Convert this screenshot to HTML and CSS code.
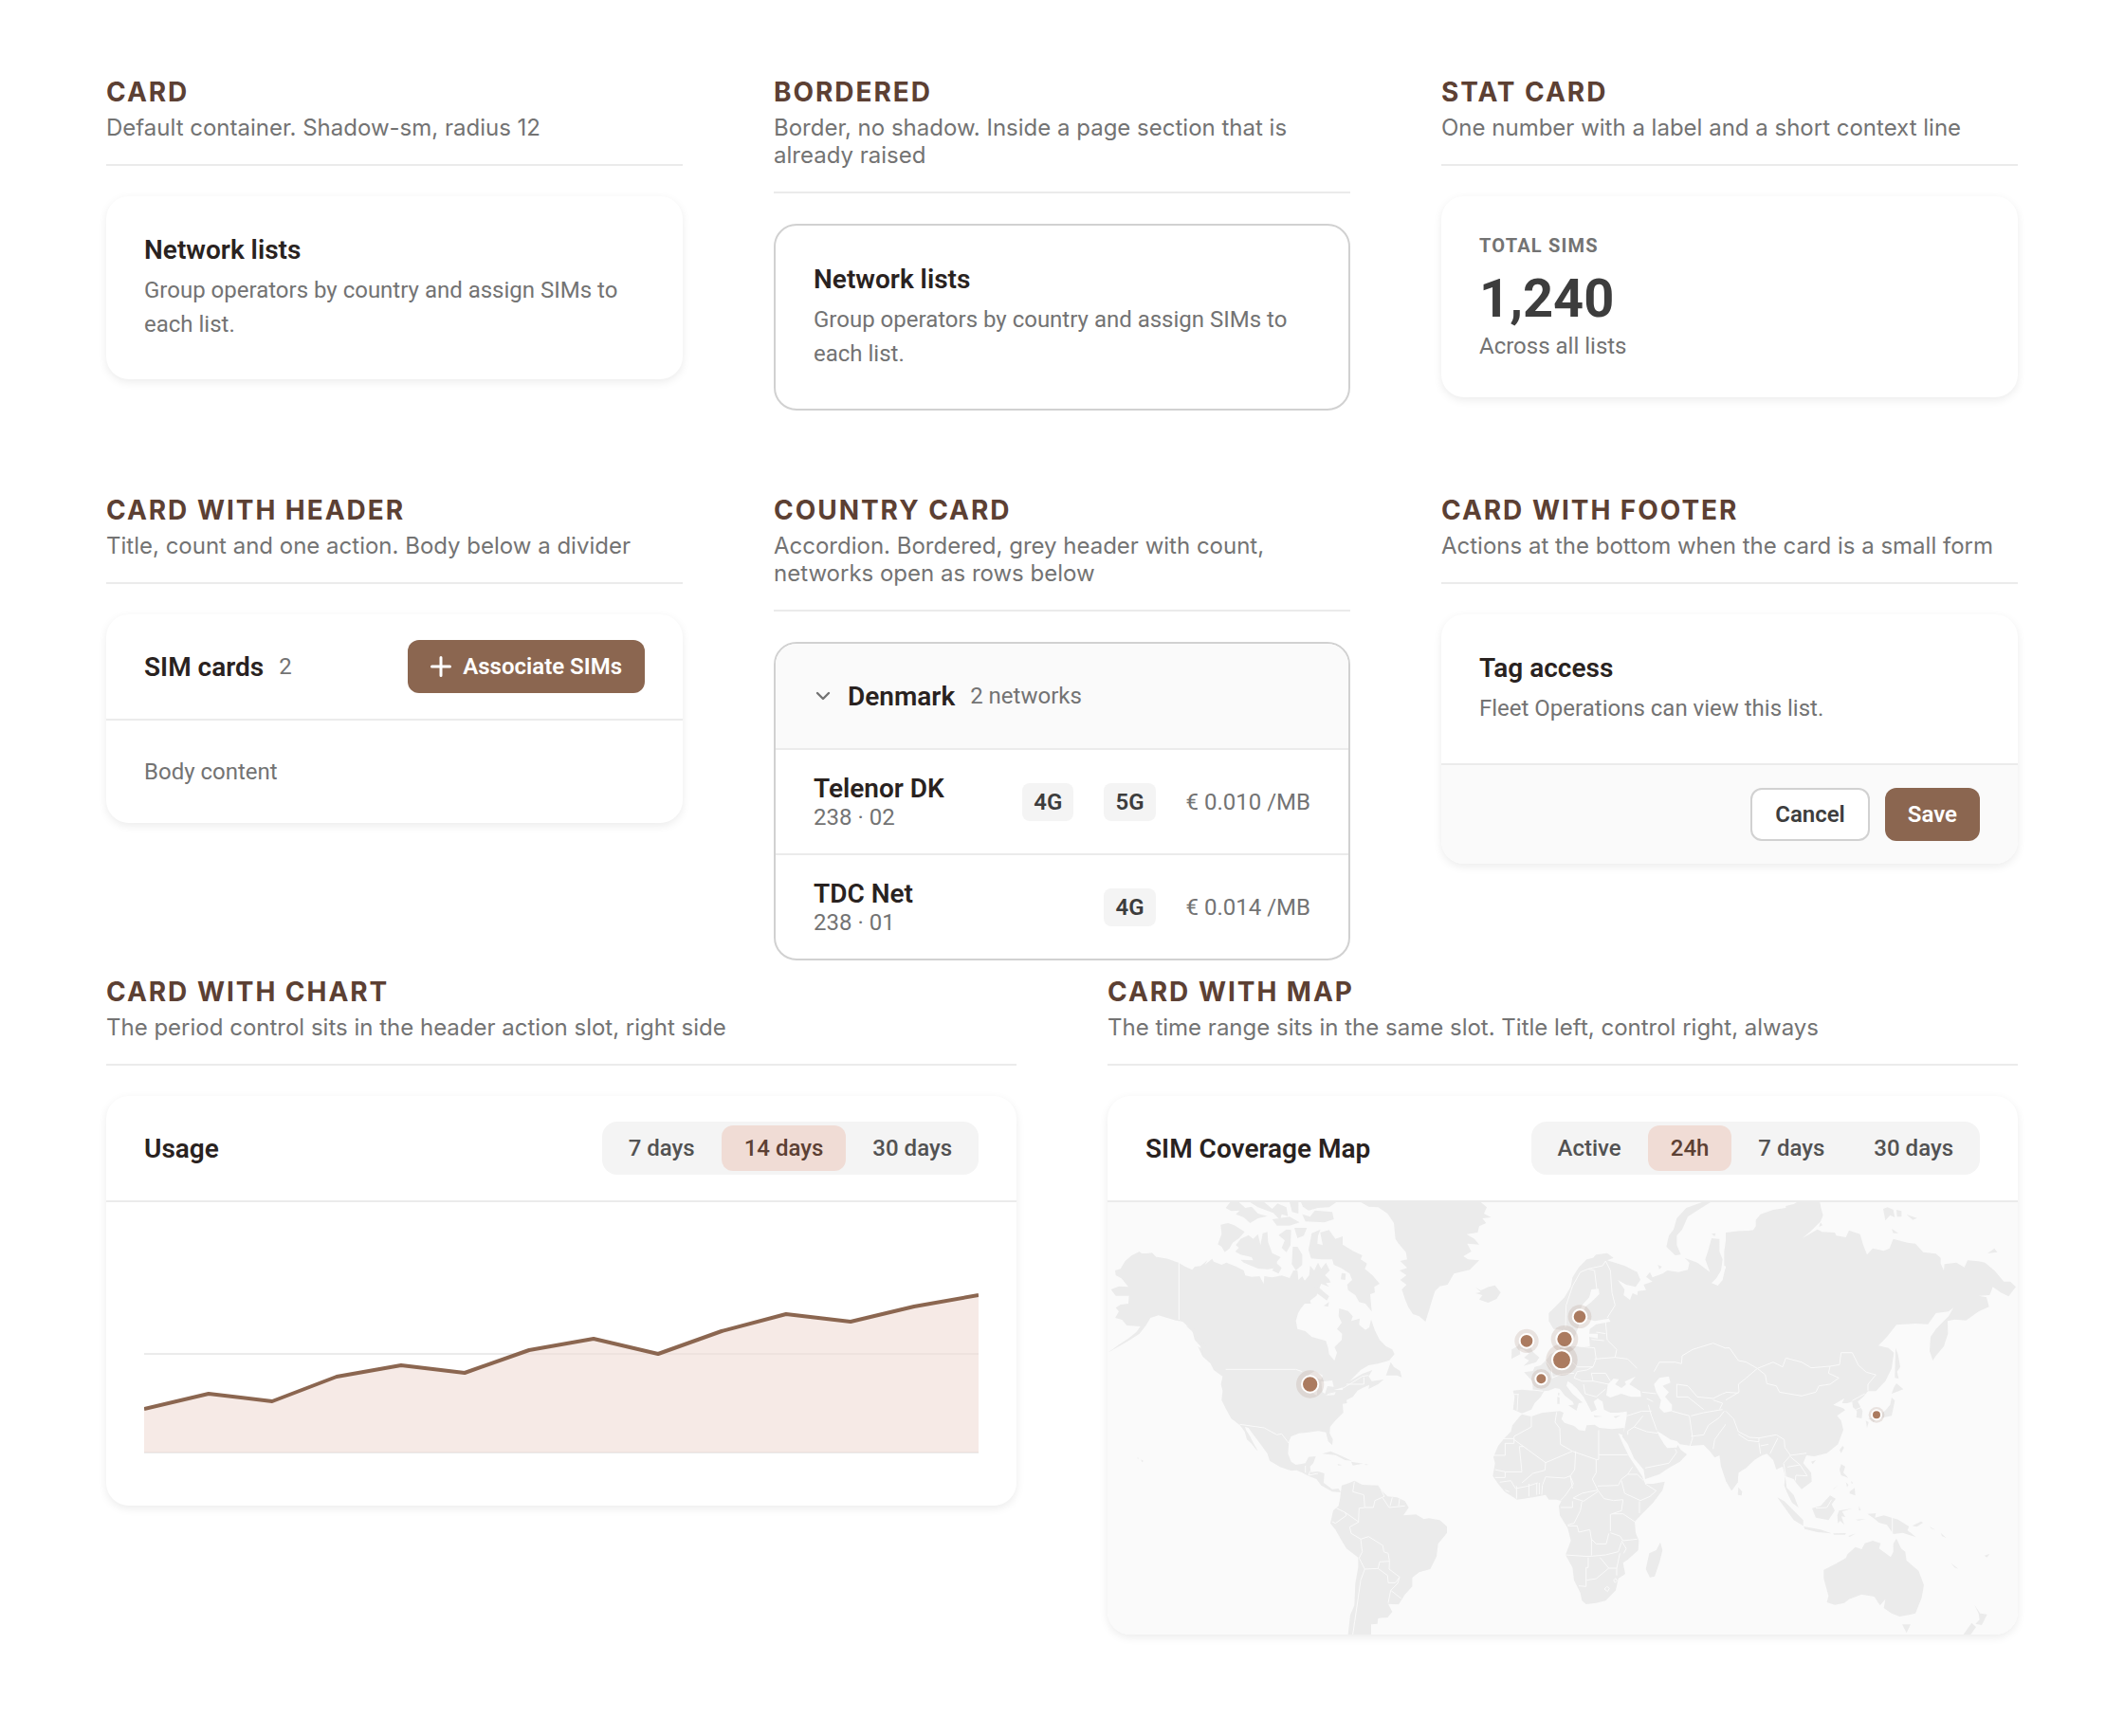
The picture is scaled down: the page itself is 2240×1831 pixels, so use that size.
FILE: index.html
```html
<!DOCTYPE html>
<html lang="en">
<head>
<meta charset="utf-8">
<meta name="viewport" content="width=device-width, initial-scale=1">
<title>Cards</title>
<link rel="stylesheet" href="styles.css">
</head>
<body>
<main class="page">
  <div class="grid grid-three">
    <section class="spec">
      <header class="spec-head">
        <h2 class="spec-name">CARD</h2>
        <p class="spec-note">Default container. Shadow-sm, radius 12</p>
      </header>
      <article class="card">
        <div class="card-body">
          <h3 class="card-title">Network lists</h3>
          <p class="card-text">Group operators by country and assign SIMs to each list.</p>
        </div>
      </article>
    </section>

    <section class="spec">
      <header class="spec-head">
        <h2 class="spec-name">BORDERED</h2>
        <p class="spec-note">Border, no shadow. Inside a page section that is already raised</p>
      </header>
      <article class="card card-bordered">
        <div class="card-body">
          <h3 class="card-title">Network lists</h3>
          <p class="card-text">Group operators by country and assign SIMs to each list.</p>
        </div>
      </article>
    </section>

    <section class="spec">
      <header class="spec-head">
        <h2 class="spec-name">STAT CARD</h2>
        <p class="spec-note">One number with a label and a short context line</p>
      </header>
      <article class="card">
        <div class="card-body">
          <h3 class="stat-label">TOTAL SIMS</h3>
          <p class="stat-value">1,240</p>
          <p class="meta">Across all lists</p>
        </div>
      </article>
    </section>

    <section class="spec">
      <header class="spec-head">
        <h2 class="spec-name">CARD WITH HEADER</h2>
        <p class="spec-note">Title, count and one action. Body below a divider</p>
      </header>
      <article class="card">
        <header class="card-header">
          <h3 class="card-title">SIM cards</h3>
          <span class="meta">2</span>
          <button type="button" class="btn btn-primary push">
            <svg class="icon-plus" viewBox="0 0 22 22" aria-hidden="true"><path d="M11 1.5v19M1.5 11h19"/></svg>
            Associate SIMs
          </button>
        </header>
        <div class="card-body">
          <p class="meta">Body content</p>
        </div>
      </article>
    </section>

    <section class="spec">
      <header class="spec-head">
        <h2 class="spec-name">COUNTRY CARD</h2>
        <p class="spec-note">Accordion. Bordered, grey header with count, networks open as rows below</p>
      </header>
      <article class="card card-bordered">
        <button type="button" class="card-header card-toggle" aria-expanded="true" aria-controls="denmark-networks">
          <svg class="icon-chevron" viewBox="0 0 20 20" aria-hidden="true"><path d="M4 7l6 6 6-6"/></svg>
          <span class="card-title">Denmark</span>
          <span class="meta">2 networks</span>
        </button>
        <ul class="networks" id="denmark-networks">
          <li class="network">
            <div class="network-name">
              <h4 class="card-title">Telenor DK</h4>
              <p class="meta">238 · 02</p>
            </div>
            <span class="badge">4G</span>
            <span class="badge">5G</span>
            <span class="meta">€ 0.010 /MB</span>
          </li>
          <li class="network">
            <div class="network-name">
              <h4 class="card-title">TDC Net</h4>
              <p class="meta">238 · 01</p>
            </div>
            <span class="badge">4G</span>
            <span class="meta">€ 0.014 /MB</span>
          </li>
        </ul>
      </article>
    </section>

    <section class="spec">
      <header class="spec-head">
        <h2 class="spec-name">CARD WITH FOOTER</h2>
        <p class="spec-note">Actions at the bottom when the card is a small form</p>
      </header>
      <article class="card">
        <div class="card-body">
          <h3 class="card-title">Tag access</h3>
          <p class="card-text">Fleet Operations can view this list.</p>
        </div>
        <footer class="card-footer">
          <button type="button" class="btn btn-outline">Cancel</button>
          <button type="button" class="btn btn-primary">Save</button>
        </footer>
      </article>
    </section>
  </div>

  <div class="grid grid-two">
    <section class="spec">
      <header class="spec-head">
        <h2 class="spec-name">CARD WITH CHART</h2>
        <p class="spec-note">The period control sits in the header action slot, right side</p>
      </header>
      <article class="card">
        <header class="card-header">
          <h3 class="card-title">Usage</h3>
          <div class="segmented push" role="group" aria-label="Period">
            <button type="button" class="segment" aria-pressed="false">7 days</button>
            <button type="button" class="segment" aria-pressed="true">14 days</button>
            <button type="button" class="segment" aria-pressed="false">30 days</button>
          </div>
        </header>
        <div class="card-body">
          <svg class="chart" viewBox="0 0 880 240" role="img" aria-label="Usage over 14 days">
            <path class="chart-grid" d="M0 120H880M0 224H880"/>
            <path class="chart-area" d="M0 178L68 162 135 170 203 144 271 132 338 140 406 116 474 104 542 120 609 96 677 78 745 86 812 70 880 58V224H0Z"/>
            <path class="chart-line" d="M0 178L68 162 135 170 203 144 271 132 338 140 406 116 474 104 542 120 609 96 677 78 745 86 812 70 880 58"/>
          </svg>
        </div>
      </article>
    </section>

    <section class="spec">
      <header class="spec-head">
        <h2 class="spec-name">CARD WITH MAP</h2>
        <p class="spec-note">The time range sits in the same slot. Title left, control right, always</p>
      </header>
      <article class="card">
        <header class="card-header">
          <h3 class="card-title">SIM Coverage Map</h3>
          <div class="segmented push" role="group" aria-label="Time range">
            <button type="button" class="segment" aria-pressed="false">Active</button>
            <button type="button" class="segment" aria-pressed="true">24h</button>
            <button type="button" class="segment" aria-pressed="false">7 days</button>
            <button type="button" class="segment" aria-pressed="false">30 days</button>
          </div>
        </header>
        <svg class="map" viewBox="0 0 2880 1368" role="img" aria-label="World map with SIM locations">
          <!-- Americas, Greenland, Iceland -->
          <g transform="translate(-24 -24)">
            <g class="land">
              <path d="M125 180L132 186 150 186 165 184 178 197 190 199 215 203 250 216 270 228 292 238 300 228 318 226 340 208 332 222 355 203 360 212 385 222 400 215 430 227 455 240 460 256 480 260 505 258 518 282 520 258 545 262 575 256 600 264 612 240 625 240 628 270 640 258 648 272 662 255 665 225 678 240 690 215 700 235 715 215 727 240 712 255 725 268 730 278 715 280 725 292 700 282 685 320 665 335 668 345 648 345 636 360 627 375 620 400 625 425 650 432 670 450 715 463 722 485 725 505 742 525 750 500 742 482 765 460 766 440 750 425 765 405 755 385 757 360 785 368 800 385 795 400 822 392 820 412 840 428 852 420 858 395 870 430 885 460 905 480 925 490 932 505 915 525 880 535 850 540 825 555 790 590 830 567 862 555 850 575 860 590 898 585 880 600 850 615 852 602 835 610 815 620 800 640 780 650 782 660 768 662 770 690 745 715 728 735 727 755 737 775 735 793 722 780 715 752 690 748 660 752 630 755 605 765 598 780 595 820 605 845 620 855 650 850 660 830 683 828 675 850 665 860 667 878 690 876 710 882 708 912 735 932 755 930 762 942 735 940 700 920 685 900 660 890 640 880 622 872 605 874 570 862 537 842 530 820 505 785 482 755 470 738 459 735 462 745 475 765 485 785 500 812 490 802 480 788 465 775 458 750 443 730 415 708 400 680 385 650 388 620 383 600 388 575 360 555 350 535 325 512 318 480 300 460 292 430 262 402 240 398 205 388 185 382 160 390 145 415 125 440 95 460 60 480 25 500 60 475 90 455 115 435 128 417 85 414 70 396 48 390 60 370 50 358 65 348 90 345 92 320 50 320 35 300 60 290 90 292 68 265 50 255 48 240 65 235 80 210 100 193Z"/>
              <path d="M382 95L405 90 425 97 458 118 440 138 420 152 410 170 395 182 385 165 373 157 385 125Z"/>
              <path d="M430 160L445 140 470 128 485 140 500 125 508 160 515 122 530 118 532 150 545 185 572 198 560 212 560 232 530 236 500 234 455 215 445 206 485 208 480 198 445 190 428 180 440 168Z"/>
              <path d="M565 128L590 110 605 112 603 160 590 182 575 168 585 145ZM615 105L655 105 645 130 625 138ZM610 165L625 165 640 190 640 222 620 240 607 220ZM545 240L560 218 575 232 565 250Z"/>
              <path d="M670 122L698 110 690 130 688 155 705 160 697 120 725 112 745 140 768 132 768 158 800 178 830 192 825 205 845 218 838 235 862 255 885 282 868 292 870 310 855 315 860 370 840 345 820 340 808 318 785 302 782 285 798 270 790 250 762 232 740 222 735 205 700 205 668 202 660 175Z"/>
              <path d="M640 62L665 70 680 50 735 55 740 78 710 88 650 85ZM636 24H748L725 40 690 42 660 50 642 38ZM398 42L412 24H440L460 42 480 38 500 60 530 68 500 75 475 90 455 72 430 62 442 50 415 52ZM475 24H520L545 45 562 28 590 40 595 68 575 62 570 80 548 58 500 40ZM545 78L600 70 632 88 600 98 560 98ZM600 24H628V60L608 55ZM655 290L690 292 725 322 718 335 695 318ZM765 248L778 250 776 270 762 268ZM708 352L725 340 722 355Z"/>
              <path d="M825 24L850 38 880 40 910 60 930 90 935 140 945 155 968 182 972 205 950 210 972 232 948 240 970 255 950 270 970 285 955 300 965 330 975 355 990 378 1010 385 1030 402 1040 370 1052 330 1060 305 1075 290 1100 285 1120 250 1170 238 1200 208 1165 205 1150 195 1175 180 1162 155 1200 158 1185 140 1160 125 1195 120 1200 100 1222 90 1210 75 1238 72 1215 60 1224 40 1205 24Z"/>
              <path d="M1188 293L1205 303 1230 292 1250 287 1268 310 1255 330 1228 342 1200 332 1210 318 1188 312 1205 308Z"/>
              <path d="M905 572L920 530 930 545 950 558 955 578 940 572ZM703 820L730 812 760 825 797 842 775 840 745 824ZM795 845L832 851 800 857ZM752 852L766 856 754 857ZM838 852L850 855 840 856ZM130 838L138 843 133 847ZM118 832L124 834 120 836ZM272 415L300 425 330 470 335 482 300 440ZM310 480L325 490 325 512Z"/>
              <path d="M762 942L765 920 790 912 805 905 830 918 880 920 890 935 910 955 940 958 965 970 977 990 960 1015 1000 1012 1025 1027 1040 1024 1075 1030 1098 1050 1098 1070 1070 1105 1065 1145 1045 1185 1010 1195 988 1212 988 1240 965 1265 945 1297 912 1295 925 1320 910 1338 880 1340 878 1358 858 1360 858 1392H785L792 1330 805 1300 808 1230 817 1180 817 1148 780 1120 765 1095 745 1060 729 1040 738 1000 755 985 760 960Z"/>
            </g>
            <g class="water">
              <path d="M660 570L680 558 705 572 700 585 680 578ZM700 592L735 588 740 608 720 606 712 630 704 625ZM712 636L745 626 742 634ZM740 618L770 610 768 618ZM678 600L690 600 686 635 676 630Z"/>
            </g>
            <g class="borders">
              <path d="M250 216V396M398 553H620L640 560M720 632L745 626M770 612L790 600 830 575 850 572M780 600H835V578M443 727L520 738 560 760 575 757 598 787M650 858V880M665 875L660 888 690 882"/>
              <path d="M805 908L800 940 835 950 838 990 820 992 818 1035 775 1005 748 992M775 1005L780 1015 745 1040 735 1035M820 1035L790 1052 795 1072 825 1090 850 1082 895 1110 898 1130 912 1135 916 1160 885 1162 880 1183 838 1185 820 1150 830 1130 825 1090M880 1183L910 1205 912 1228 935 1228 948 1210 915 1185 916 1160M948 1210L942 1230 920 1252 953 1278M920 1252L912 1292M838 1185L825 1220 815 1290 800 1392M890 935L900 955 870 968 865 990 838 990M895 960L915 990 965 985M925 958L918 985M948 962L945 985"/>
            </g>
          </g>
          <!-- Europe, Africa, western Asia -->
          <g transform="translate(1146 -24)">
            <g class="land">
              <path d="M250 375L275 350 300 325 320 290 325 262 345 230 370 205 390 200 400 190 435 185 455 200 435 208 490 225 530 245 540 270 525 292 495 285 468 270 490 300 487 318 507 333 515 312 530 318 532 305 558 302 550 285 578 275 558 260 570 245 578 262 610 250 625 240 660 245 690 238 695 215 680 200 720 215 760 245 745 205 755 175 765 138 790 140 790 180 800 205 795 240 780 265 765 280 785 288 800 270 808 235 825 235 832 262 830 232 805 225 805 180 810 145 830 165 850 160 875 205 878 185 860 155 852 118 900 112V840L875 865 850 880 848 910 828 937 810 905 795 860 790 825 775 832 760 812 740 792 700 795 665 790 655 780 635 775 605 755 592 748 600 765 615 790 625 802 655 800 658 792 668 808 687 822 665 845 630 865 600 885 555 900 550 870 520 835 500 790 482 765 490 740 497 700 497 686 470 690 445 690 425 680 420 655 405 645 392 655 402 680 385 688 375 668 360 640 340 615 322 598 310 590 306 605 325 630 357 658 345 660 338 682 325 655 300 635 285 615 270 612 250 620 235 622 225 640 205 660 195 680 165 692 145 683 137 680 142 640 137 620 165 617 200 620 198 590 172 562 200 558 205 545 225 540 245 520 255 505 285 490 285 450 292 428 265 425 250 400Z"/>
              <path d="M735 24L762 24 720 50 690 70 672 110 655 130 655 160 668 190 650 192 622 165 630 130 645 110 655 75 685 42ZM595 222L608 228 600 236ZM765 124L778 122 775 132Z"/>
              <path d="M150 485L165 445 195 450 190 475 200 498 220 515 210 530 170 542 188 525 172 516 188 502 168 490ZM133 490L155 478 160 505 132 520Z"/>
              <path d="M277 640L284 642 284 662 277 662ZM280 626L284 628 283 637 279 634ZM312 667L340 663 338 684ZM392 698L420 702 395 704ZM455 702L477 698 462 707Z"/>
              <path d="M165 695L195 702 230 690 285 685 297 690 290 710 300 722 330 732 345 745 365 748 370 730 395 728 410 738 450 742 488 738 487 762 470 755 485 790 505 830 525 860 545 890 555 915 580 915 617 908 610 935 580 975 545 1010 522 1035 525 1070 535 1095 533 1125 500 1155 485 1165 492 1200 470 1215 462 1252 430 1285 400 1292 368 1296 355 1285 350 1260 330 1220 325 1180 303 1140 320 1095 310 1055 285 1015 282 985 290 970 275 965 250 965 240 950 200 958 150 965 110 940 90 915 73 890 80 850 75 830 90 795 110 770 130 750 135 730 160 700Z"/>
              <path d="M603 1100L610 1125 600 1165 585 1208 570 1211 557 1185 568 1135 590 1125ZM850 926L862 940 860 952 848 950Z"/>
            </g>
            <g class="water">
              <path d="M345 481L380 480 378 450 405 455 405 440 378 440 380 425 400 410 445 402 440 392 395 400 358 390 365 355 385 340 410 315 408 298 385 300 378 325 355 350 345 380 345 415 330 455 305 462 305 478ZM296 425L310 440 300 470 292 455Z"/>
              <path d="M432 635L437 600 455 582 472 585 460 600 480 612 495 600 490 592 525 575 505 600 540 622 542 640 510 640 480 630 445 642Z"/>
              <path d="M583 600L600 580 630 575 635 595 610 605 630 625 618 640 640 665 640 685 615 690 600 675 605 650 590 625Z"/>
            </g>
            <g class="borders">
              <path d="M195 702V735L140 765V787H112V825H75M107 772H138M140 775L240 848 325 812M157 797H170M157 797L165 877H112L80 870M240 848L238 872 200 882 165 912M275 688L270 720 285 740 287 790 325 812 400 838M408 745V838H400V880L388 900 405 935 355 945 327 960M408 823H500M335 812L332 870 318 890 325 930M318 890L300 897 240 893 230 920 228 950M318 890L328 915 300 955 287 968M405 935L425 962 455 968 485 965 480 1000 445 1012V1065M405 922L470 920 480 900 500 885 515 862M500 885H530L550 905M555 915L590 937 570 955 540 968 490 945 480 905M537 970V1008M450 1010H485L522 1035M355 970L350 1000 330 1040 310 1045M287 990H325V970M327 960L360 970 405 940M310 1048H340L345 1068 380 1060 385 1090 400 1105 432 1105 440 1072M385 1090V1142M303 1140L375 1145 430 1140 470 1130 480 1100M375 1148V1180H368V1240L345 1238M370 1220L400 1215 440 1182H465M412 1148L440 1182M465 1182V1205M465 1182L475 1135M445 1070L475 1080 485 1095 530 1090M480 1095L495 1120 487 1135"/>
              <path d="M112 877V895H80M95 910L130 905 145 930 185 922 215 912M148 922V962M187 915V955M212 912V950M220 912V948M112 935L125 940M426 1248L434 1240 442 1246 436 1256ZM455 1220L462 1214 466 1222 460 1228Z"/>
              <path d="M497 700L545 685 575 685M520 735L500 748V760M520 735L548 700M520 735L560 750 595 755M555 865L630 850 655 815 650 805M565 665L575 700 592 745M697 795L705 770 695 700 640 685M700 765L740 760 755 730 790 705 805 685M770 805L775 775 815 720 835 710M700 700L740 690 800 680M583 560L600 530 650 530 670 535 672 510 705 490 770 470 820 490 850 520 900 550M655 600L690 605 720 640 770 645 800 630 860 610 900 600M655 600V640L690 640 740 680M770 650L800 660 790 680M545 625L590 630M560 645L580 655"/>
              <path d="M303 420L305 350 325 290 350 245 375 235 395 240 402 300M375 235L420 225 430 210 445 240 450 310 460 350 435 390M430 405L435 460 465 490 460 515 500 520 530 550M345 480L395 485 400 520 390 545 340 545 325 530M385 458L425 462M400 435L430 440M395 520L460 515M390 545L370 555 340 560 330 580 355 590 390 590 440 600M390 590L385 565 430 565 445 590M360 600L365 630 400 640 430 615M260 580L290 568 330 565M200 618L232 622M153 630L150 683M140 632H155M240 525L258 550 262 580M850 750L900 780M820 690L840 710 850 750 880 755"/>
            </g>
          </g>
          <!-- Eastern Asia, Oceania -->
          <g transform="translate(1956 -24)">
            <g class="land">
              <path d="M0 120L45 115 85 115 95 100 95 80 110 62 150 48 190 42 190 36 215 30 225 24H298L302 45 308 65 300 85 270 115 242 138 290 110 305 118 345 120 350 130 380 135 390 113 425 125 435 160 447 190 465 170 500 178 518 170 530 140 575 152 600 155 625 182 665 187 680 200 680 218 690 240 692 220 730 215 755 230 765 208 800 211 820 215 850 240 880 275 900 275 918 292 895 322 870 310 845 292 835 318 800 320 825 325 833 355 800 370 760 398 725 395 702 400 703 440 690 480 665 510 655 525 645 495 648 450 665 425 690 400 705 385 720 358 705 370 665 375 640 410 600 408 540 412 510 450 483 478 515 485 532 500 525 550 505 590 475 622 450 622 435 640 418 655 433 685 430 708 413 705 415 685 402 672 400 655 385 660 368 660 375 645 340 665 370 675 378 682 352 700 365 715 372 745 355 790 320 818 280 828 255 825 245 850 270 880 272 908 240 932 225 915 215 900 200 895 188 890 180 860 160 870 150 840 130 820 115 825 90 840 60 865 40 880 38 910 20 935 0 905Z"/>
              <path d="M188 890L193 928 215 950 230 990 210 975 195 945 185 920ZM498 45L512 40 530 48 535 72 520 65 505 82ZM540 48L556 52 556 70 542 70ZM572 63L605 74 592 80ZM525 108L546 122 530 122ZM828 186L850 170 859 182ZM300 88L306 97 295 102Z"/>
              <path d="M525 642L535 652 525 700 500 705 470 715 450 710 480 700 505 683 520 665ZM443 715L452 720 447 738ZM462 715L474 714 466 720ZM540 597L562 616 525 630 532 610ZM537 485L545 505 552 545 542 560 547 582 535 580Z"/>
              <path d="M370 795L374 800 365 818 360 808ZM270 845L285 840 275 853ZM365 853L378 860 372 880 388 896 365 888 360 870ZM392 940L408 928 410 952 392 946ZM380 910L388 918 384 926ZM398 905L403 915 397 913ZM340 934L358 915 342 930Z"/>
              <path d="M163 958L185 970 215 1000 245 1030 245 1048 215 1030 190 995ZM247 1050L300 1060 335 1072 290 1068 250 1058ZM340 1072L380 1071 378 1076 342 1076ZM388 1080L412 1072 392 1083ZM273 992L300 985 330 952 348 962 335 980 345 1000 325 1030 285 1022ZM358 1000L400 993 368 1003 378 1020 366 1018 375 1045 362 1032 355 1040 353 1015ZM422 985L427 1000 421 998ZM410 1028L444 1026 420 1031Z"/>
              <path d="M448 1010L475 1008 472 1022 500 1015 545 1028 580 1050 575 1062 602 1084 560 1070 530 1074 510 1045 485 1038 470 1025ZM590 1048L618 1034 624 1038 605 1051ZM645 1050L665 1062 650 1056ZM680 1070L698 1087 684 1080ZM713 1166L736 1184 724 1180ZM818 1142L835 1137 826 1148Z"/>
              <path d="M310 1187L350 1167 380 1150 385 1138 410 1115 430 1122 440 1103 465 1095 490 1103 485 1120 522 1147 530 1130 530 1105 540 1088 555 1120 568 1130 572 1158 610 1190 627 1235 620 1275 600 1325 580 1330 550 1335 525 1325 500 1308 505 1280 488 1300 470 1272 430 1265 390 1280 375 1292 345 1298 320 1290 325 1270 310 1215Z"/>
              <path d="M558 1360L585 1360 572 1387ZM787 1298L805 1325 827 1328 810 1362 790 1358 803 1345 800 1325ZM778 1355L792 1368 775 1392H752Z"/>
            </g>
            <g class="borders">
              <path d="M100 550L150 530 180 545 190 517 240 530 270 548 330 543 325 565 358 580 330 600 295 605 285 625 240 637 170 625 160 605 130 598 125 570ZM330 543L360 538 365 500 400 500 420 540 445 562 475 570 450 600V620M440 630L400 652M0 485L12 485 40 525 65 530 100 550 65 580 40 600 42 625 0 650M0 625L40 628M0 685L25 710 40 750 75 768 105 770V782L70 778 40 758M105 770L160 760 185 775 187 800 205 825 255 818M105 785L110 820M110 795L135 790M165 770L140 820M205 825L183 850 190 890M205 830L235 855 258 890 222 888 220 905M195 862L235 855M412 680L432 672M527 1022V1076M285 992L320 990 335 965"/>
            </g>
          </g>
          <g class="pins">
            <g><circle class="halo" cx="641" cy="576" r="44"/><circle class="pin" cx="641" cy="576" r="26"/></g>
            <g><circle class="halo" cx="1494" cy="362" r="37"/><circle class="pin" cx="1494" cy="362" r="22"/></g>
            <g><circle class="halo" cx="1446" cy="433" r="43"/><circle class="pin" cx="1446" cy="433" r="26"/></g>
            <g><circle class="halo" cx="1437" cy="499" r="50"/><circle class="pin" cx="1437" cy="499" r="30"/></g>
            <g><circle class="halo" cx="1326" cy="439" r="38"/><circle class="pin" cx="1326" cy="439" r="22"/></g>
            <g><circle class="halo" cx="1372" cy="559" r="31"/><circle class="pin" cx="1372" cy="559" r="18"/></g>
            <g><circle class="halo" cx="2433" cy="673" r="25"/><circle class="pin" cx="2433" cy="673" r="15"/></g>
          </g>
        </svg>
      </article>
    </section>
  </div>
</main>
</body>
</html>
```
FILE: styles.css
```css
:root {
  --brand: #8b6650;
  --brand-dark: #5c4033;
  --brand-soft: #f0dcd5;
  --ink: #292220;
  --ink-soft: #3d3d3d;
  --muted: #737373;
  --line: #ebebeb;
  --line-strong: #d1d1d1;
  --surface-soft: #fafafa;
  --fill: #f4f4f4;
}

* {
  box-sizing: border-box;
}

body,
h2,
h3,
h4,
p,
ul {
  margin: 0;
}

body {
  background: #fff;
  color: var(--ink);
  font: 400 24px/28px Roboto, sans-serif;
}

button {
  border: 0;
  font: inherit;
  cursor: pointer;
}

.page {
  display: flex;
  flex-direction: column;
  gap: 16px;
  padding: 80px 5% 104px;
}

.grid {
  display: grid;
  gap: 88px 96px;
  align-items: start;
}

.grid-three {
  grid-template-columns: repeat(3, minmax(0, 1fr));
}

.grid-two {
  grid-template-columns: repeat(2, minmax(0, 1fr));
}

/* Section label above each card */
.spec {
  display: flex;
  flex-direction: column;
  gap: 32px;
}

.spec-head {
  display: flex;
  flex-direction: column;
  gap: 6px;
  padding-bottom: 24px;
  border-bottom: 2px solid var(--line);
  font-family: Inter, sans-serif;
}

.spec-name {
  color: var(--brand-dark);
  font-size: 28px;
  line-height: 34px;
  font-weight: 700;
  letter-spacing: 0.07em;
}

.spec-note {
  color: var(--muted);
  line-height: 29px;
}

/* Card */
.card {
  overflow: hidden;
  border-radius: 24px;
  background: #fff;
  box-shadow: 0 3px 10px rgba(0, 0, 0, 0.08);
}

.card-bordered {
  border: 2px solid var(--line-strong);
  box-shadow: none;
}

.card-body {
  padding: 40px;
}

.card-title {
  color: var(--ink);
  font-size: 28px;
  line-height: 33px;
  font-weight: 600;
}

.card-text {
  margin-top: 8px;
  color: var(--muted);
  line-height: 36px;
}

.meta {
  color: var(--muted);
}

.card-header {
  display: flex;
  align-items: center;
  gap: 16px;
  min-height: 112px;
  padding: 0 40px;
  border-bottom: 2px solid var(--line);
}

.card-toggle {
  width: 100%;
  background: var(--surface-soft);
  text-align: left;
}

.card-footer {
  display: flex;
  justify-content: flex-end;
  gap: 16px;
  padding: 24px 40px;
  border-top: 2px solid var(--line);
  background: var(--surface-soft);
}

.push {
  margin-left: auto;
}

.stat-label {
  margin-bottom: 8px;
  color: var(--muted);
  font-size: 20px;
  line-height: 24px;
  font-weight: 700;
  letter-spacing: 0.06em;
}

.stat-value {
  color: var(--ink-soft);
  font-size: 56px;
  line-height: 72px;
  font-weight: 700;
}

/* Buttons */
.btn {
  display: inline-flex;
  align-items: center;
  gap: 12px;
  height: 56px;
  padding: 0 24px;
  border-radius: 12px;
  font-weight: 600;
}

.btn-primary {
  background: var(--brand);
  color: #fff;
}

.btn-outline {
  border: 2px solid var(--line-strong);
  background: #fff;
  color: var(--ink-soft);
}

.icon-plus {
  width: 22px;
  height: 22px;
  fill: none;
  stroke: currentColor;
  stroke-width: 3;
  stroke-linecap: round;
}

.icon-chevron {
  width: 20px;
  height: 20px;
  fill: none;
  stroke: var(--muted);
  stroke-width: 2.4;
  stroke-linecap: round;
  stroke-linejoin: round;
}

/* Network rows */
.networks {
  padding: 0;
  list-style: none;
}

.network {
  display: flex;
  align-items: center;
  gap: 32px;
  padding: 24px 40px;
}

.network + .network {
  border-top: 2px solid var(--line);
}

.network-name {
  flex: 1;
}

.badge {
  padding: 6px 12px;
  border-radius: 8px;
  background: var(--fill);
  color: var(--ink-soft);
  font-weight: 600;
}

/* Segmented control */
.segmented {
  display: flex;
  gap: 4px;
  padding: 4px;
  border-radius: 16px;
  background: var(--fill);
}

.segment {
  height: 48px;
  padding: 0 24px;
  border-radius: 12px;
  background: transparent;
  color: #525252;
  font-weight: 500;
}

.segment[aria-pressed="true"] {
  background: var(--brand-soft);
  color: var(--brand-dark);
}

/* Usage chart */
.chart {
  display: block;
  width: 100%;
  fill: none;
}

.chart-grid {
  stroke: var(--line);
  stroke-width: 2;
}

.chart-area {
  fill: var(--brand-soft);
  fill-opacity: 0.6;
}

.chart-line {
  stroke: var(--brand);
  stroke-width: 4;
  stroke-linejoin: round;
}

/* Coverage map */
.map {
  display: block;
  width: 100%;
  background: var(--surface-soft);
}

.land {
  fill: var(--line);
}

.water {
  fill: var(--surface-soft);
}

.borders {
  fill: none;
  stroke: var(--surface-soft);
  stroke-width: 3;
  stroke-linejoin: round;
}

.halo {
  fill: var(--brand);
  fill-opacity: 0.15;
}

.pin {
  fill: #ab7b60;
  stroke: #fff;
  stroke-width: 6;
}
```
